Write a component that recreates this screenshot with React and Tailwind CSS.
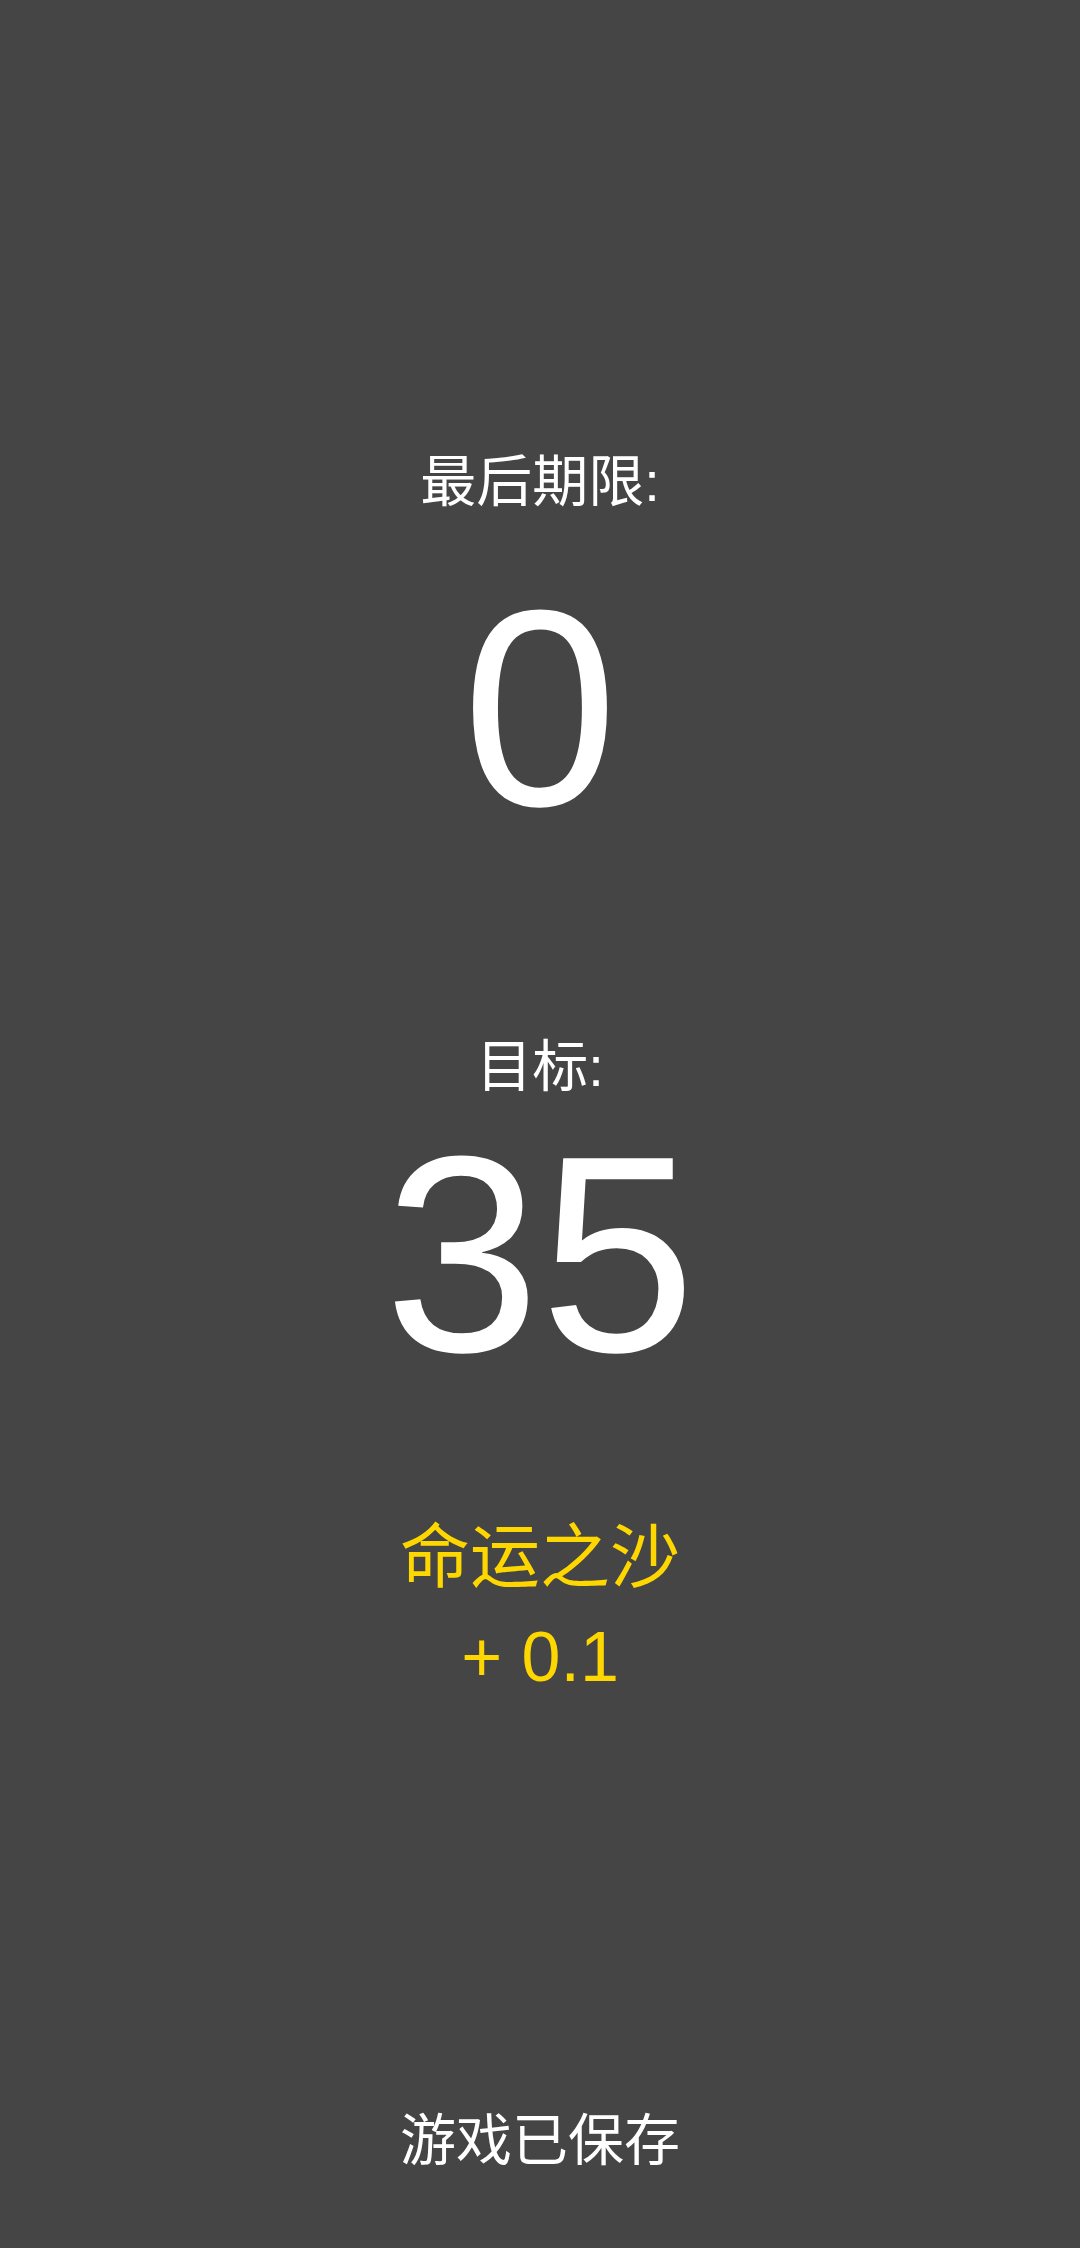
// App.jsx
import React from "react";

/* -----------------------------------------------------------------
   Countdown screen – deadline, goal, bonus and save notice
   ----------------------------------------------------------------- */
const FONT = "font-['Liberation_Sans','Noto_Sans_CJK_SC',sans-serif]";

export default function App() {
  const deadline = 0;
  const goal = 35;
  const bonus = 0.1;

  return (
    <div
      className={`min-h-[2248px] w-full bg-[#454545] text-white ${FONT} flex flex-col items-center text-center pt-[454px]`}
    >
      {/* ---------- Deadline ---------- */}
      <div className="text-[56px] leading-none">最后期限:</div>
      <div className="text-[280px] leading-none mt-[58px]">{deadline}</div>

      {/* ---------- Goal ---------- */}
      <div className="text-[56px] leading-none mt-[191px]">目标:</div>
      <div className="text-[280px] leading-none mt-[19px]">{goal}</div>

      {/* ---------- Bonus ---------- */}
      <div className="text-[70px] leading-none mt-[129px] text-[#ffd700]">
        命运之沙
      </div>
      <div className="text-[70px] leading-none mt-[29px] text-[#ffd700]">
        + {bonus}
      </div>

      {/* ---------- Save notice ---------- */}
      <div className="text-[56px] leading-none mt-[421px]">游戏已保存</div>
    </div>
  );
}
